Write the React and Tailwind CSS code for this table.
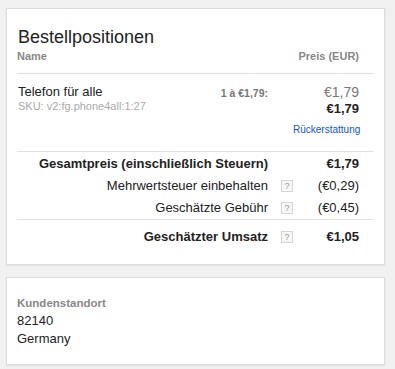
export default function App() {
  const font = { fontFamily: '"Liberation Sans", Arial, sans-serif' };
  const Q = () => (
    <div className="ml-[13px] w-[12px] h-[12px] border border-[#d6d6d6] bg-[#f7f7f7] text-[9px] leading-[10px] text-[#999] text-center">?</div>
  );
  return (
    <div className="min-h-[369px] w-[395px] bg-[#f1f1f1] pt-[8px] pl-[6px]" style={font}>
      <div className="w-[379px] bg-white border border-[#dcdcdc] shadow-[0_1px_2px_rgba(0,0,0,0.08)] pt-[17px] px-[10px] pb-[16px]">
        <div className="pl-[1px] text-[18px] leading-[22px] text-[#222]">Bestellpositionen</div>
        <div className="mt-[1px] flex pr-[15px] pb-[10px] border-b border-[#e2e2e2] text-[11px] leading-[14px] font-bold text-[#888]">
          <div className="flex-1">Name</div>
          <div>Preis (EUR)</div>
        </div>
        <div className="flex pt-[10px] pr-[15px] pb-[14px] border-b border-[#e2e2e2]">
          <div className="flex-1 pl-[1px]">
            <div className="text-[13px] leading-[16px] text-[#222]">Telefon für alle</div>
            <div className="text-[11px] leading-[12px] text-[#aaa]">SKU: v2:fg.phone4all:1:27</div>
          </div>
          <div className="mr-[25px] pt-[3px] text-[10.5px] leading-[13px] font-bold text-[#777]">1 à €1,79:</div>
          <div className="w-[66px] text-right">
            <div className="text-[14px] leading-[16px] text-[#777]">€1,79</div>
            <div className="text-[13px] leading-[17px] font-bold text-[#222]">€1,79</div>
            <div className="mt-[6px] text-[10px] leading-[14px] text-[#1155cc]">Rückerstattung</div>
          </div>
        </div>
        <div className="pt-[1px] pr-[15px] border-b border-[#e2e2e2] text-[13px] leading-[22px] text-[#222]">
          <div className="flex items-center">
            <div className="flex-1 text-right font-bold">Gesamtpreis (einschließlich Steuern)</div>
            <div className="ml-[13px] w-[12px]" />
            <div className="w-[66px] text-right font-bold">€1,79</div>
          </div>
          <div className="flex items-center">
            <div className="flex-1 text-right">Mehrwertsteuer einbehalten</div>
            <Q />
            <div className="w-[66px] text-right">(€0,29)</div>
          </div>
          <div className="flex items-center">
            <div className="flex-1 text-right">Geschätzte Gebühr</div>
            <Q />
            <div className="w-[66px] text-right">(€0,45)</div>
          </div>
        </div>
        <div className="pt-[6px] pr-[15px] text-[13px] leading-[22px] text-[#222]">
          <div className="flex items-center">
            <div className="flex-1 text-right font-bold">Geschätzter Umsatz</div>
            <Q />
            <div className="w-[66px] text-right font-bold">€1,05</div>
          </div>
        </div>
      </div>
      <div className="mt-[12px] w-[379px] h-[88px] bg-white border border-[#dcdcdc] shadow-[0_1px_2px_rgba(0,0,0,0.08)] pt-[18px] px-[10px]">
        <div className="text-[11.5px] leading-[14px] font-bold text-[#888]">Kundenstandort</div>
        <div className="mt-[2px] text-[13px] leading-[18px] text-[#222]">82140</div>
        <div className="text-[13px] leading-[18px] text-[#222]">Germany</div>
      </div>
    </div>
  );
}
